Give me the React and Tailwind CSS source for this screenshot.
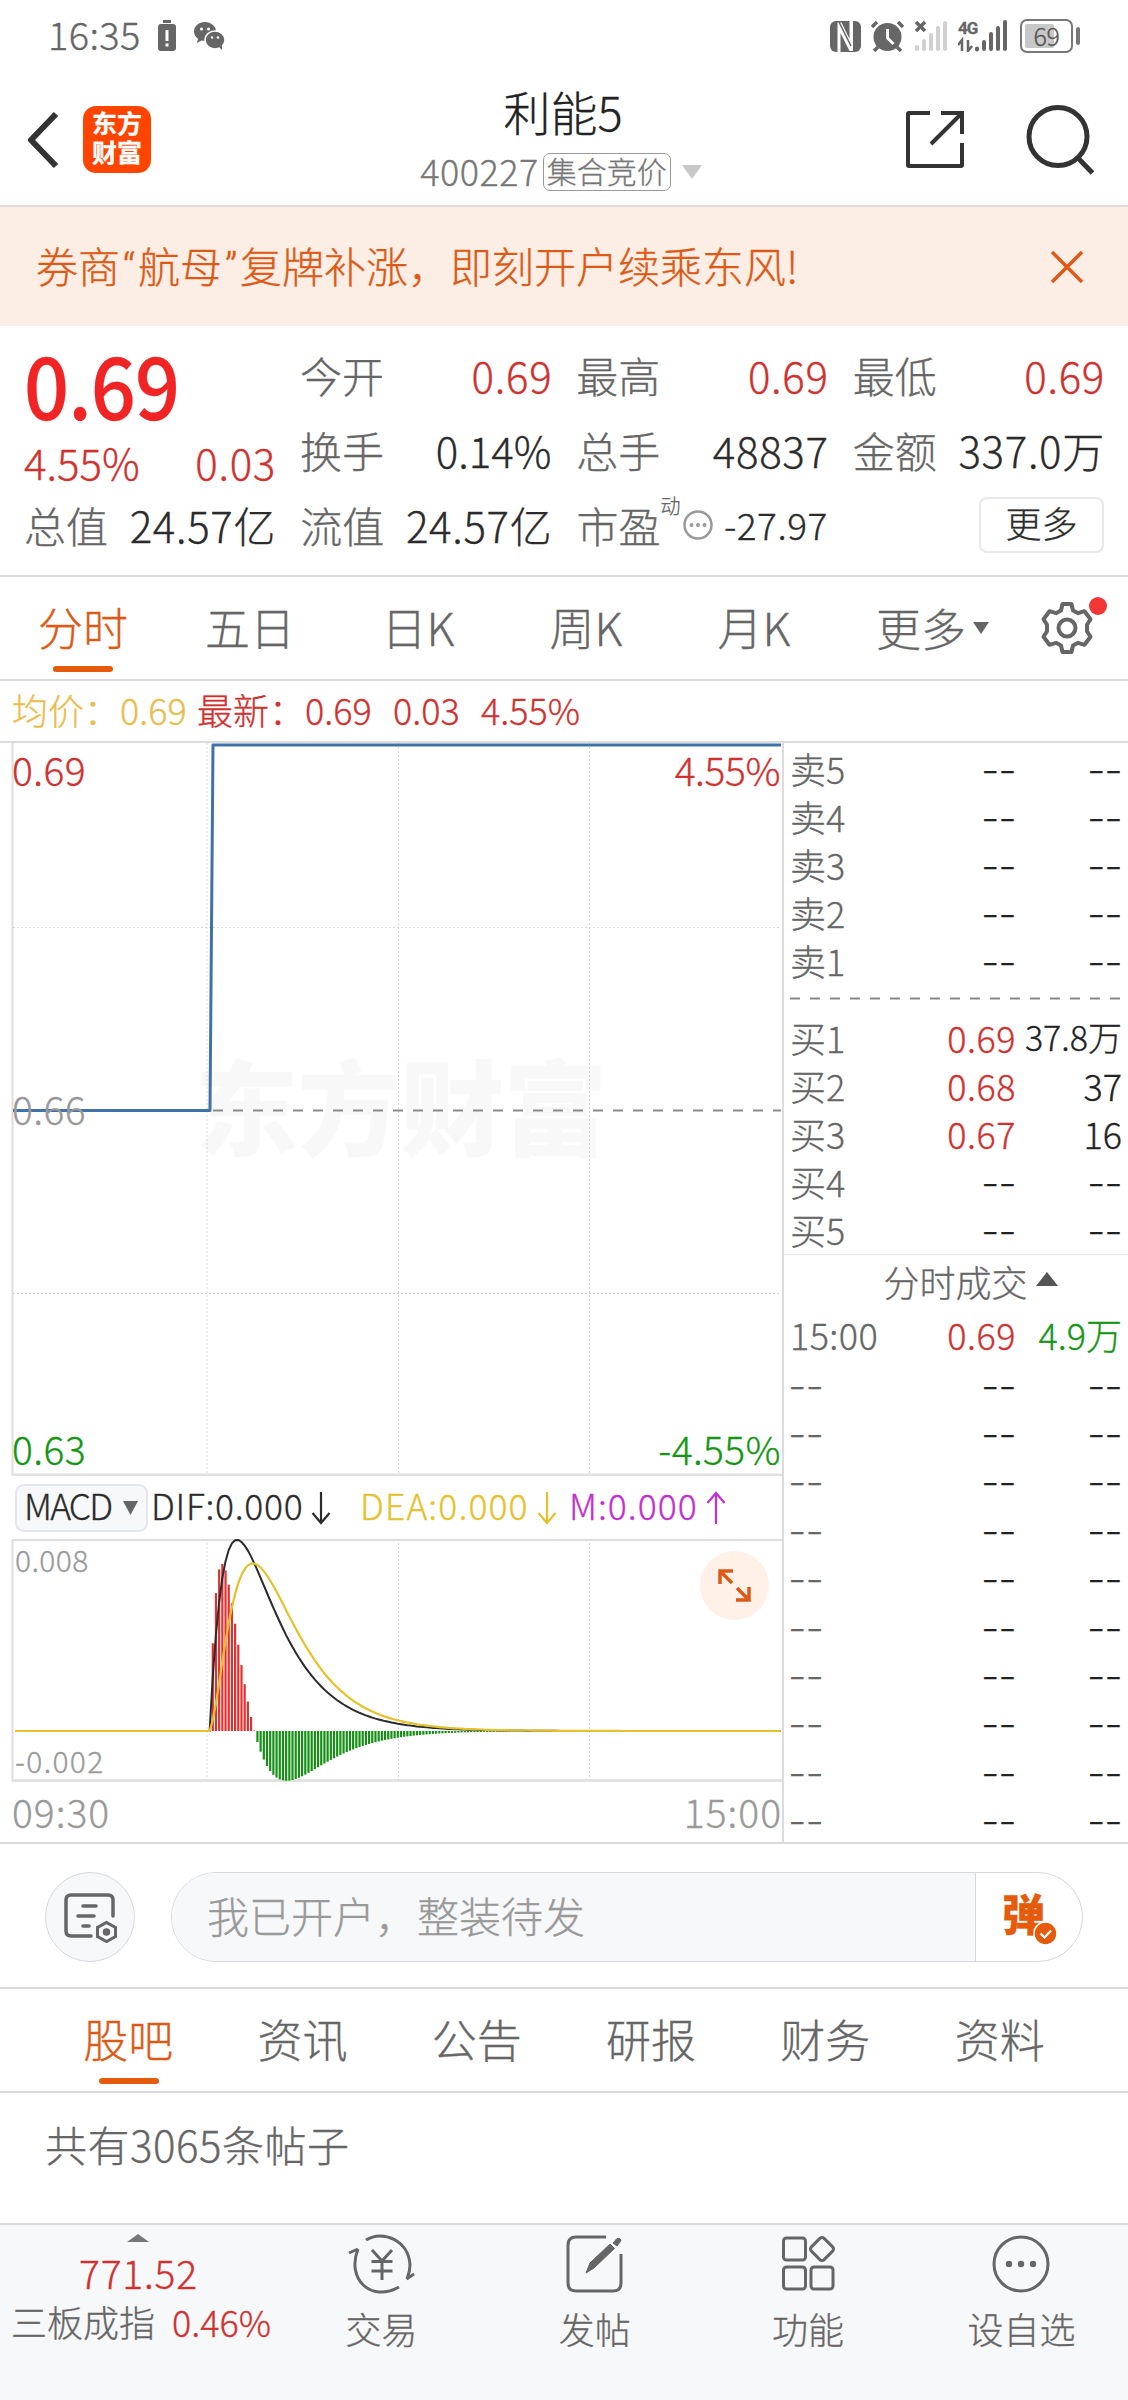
import React from 'react'

const quotes = [
  [['今开', '0.69', true], ['最高', '0.69', true], ['最低', '0.69', true]],
  [['换手', '0.14%'], ['总手', '48837'], ['金额', '337.0万']],
]

const asks = [['卖5'], ['卖4'], ['卖3'], ['卖2'], ['卖1']]
const bids = [['买1', '0.69', '37.8万'], ['买2', '0.68', '37'], ['买3', '0.67', '16'], ['买4'], ['买5']]

// MACD(12, 26, 9) of a price that jumps from 0.66 to 0.69 at minute 62
function buildMacd() {
  const pts = []
  let fast = 0.66, slow = 0.66, dea = 0
  for (let i = 0; i <= 240; i++) {
    const price = i < 62 ? 0.66 : 0.69
    fast += (price - fast) * (2 / 13)
    slow += (price - slow) * (2 / 27)
    const dif = fast - slow
    dea += (dif - dea) * 0.2
    pts.push({ x: 15 + i * 3.19, dif, dea, bar: 2 * (dif - dea) })
  }
  return pts
}

const macd = buildMacd()
const peak = Math.max(...macd.map(p => p.dif))
const toY = v => 192 - (v / peak) * 191
const line = key => macd.map(p => `${p.x.toFixed(1)},${toY(p[key]).toFixed(1)}`).join(' ')

function StatusBar() {
  return (
    <div className="h-[70px] flex items-center pl-[48px] pr-[48px] pt-[2px] text-[#666]">
      <span className="text-[38px] leading-[70px] -mt-[4px] w-[110px] tracking-[0.400px]">16:35</span>
      <svg width="18" height="32" viewBox="0 0 18 32" fill="#666">
        <rect x="5" y="0" width="8" height="3" />
        <rect x="0" y="4" width="18" height="27" rx="3" />
        <path d="M9 10v11M9 23.5v3" stroke="#fff" strokeWidth="3" />
      </svg>
      <svg className="ml-[18px]" width="31" height="28" viewBox="0 0 31 28" fill="#666">
        <path d="M11 0C4.900 0 0 4.200 0 9.500c0 3 1.600 5.500 4 7.200L3 21l4.500-2.500c1.200.3 2.300.5 3.500.5 6 0 11-4.300 11-9.500S17 0 11 0z" />
        <ellipse cx="21" cy="18" rx="10" ry="9" stroke="#fff" strokeWidth="1.500" />
        <path d="M25 25l3 3v-5z" />
        <g fill="#fff"><circle cx="7.500" cy="7" r="1.500" /><circle cx="14.500" cy="7" r="1.500" /><circle cx="18" cy="15.500" r="1.300" /><circle cx="24" cy="15.500" r="1.300" /></g>
      </svg>
      <div className="flex-1" />
      <svg width="31" height="31" viewBox="0 0 31 31">
        <rect width="31" height="31" rx="6" fill="#666" />
        <path d="M7.500 31V1.500l4 0L19.500 18V0h3.500v30h-3.500L10.500 12v19z" fill="#fff" />
        <path d="M9 1l12 24" stroke="#666" strokeWidth="1.500" />
      </svg>
      <svg className="ml-[10px]" width="33" height="32" viewBox="0 0 33 32">
        <circle cx="16.500" cy="17" r="14" fill="#666" />
        <path d="M1 7l5-5M32 7l-5-5M7 27l-4 4M26 27l4 4" stroke="#666" strokeWidth="3.500" />
        <path d="M16.500 9v9l6 6" fill="none" stroke="#fff" strokeWidth="3" />
      </svg>
      <svg className="ml-[10px]" width="34" height="32" viewBox="0 0 34 32">
        <path d="M2 2l9 9M11 2l-9 9" stroke="#666" strokeWidth="3.500" />
        <path d="M3 29v-2M10 29v-8M17 29V15M24 29V8M31 29V3" stroke="#d0d0d0" strokeWidth="4" strokeLinecap="round" />
      </svg>
      <div className="ml-[10px] w-[50px] h-[32px] relative">
        <span className="absolute left-0 -top-[1px] text-[17px] leading-[18px] font-bold font-['Roboto',sans-serif] tracking-[-1px]">4G</span>
        <svg width="50" height="32" viewBox="0 0 50 32">
          <path d="M4 31V20l-4 5M10 20v11l4-5" fill="none" stroke="#666" strokeWidth="2.500" />
          <path d="M19 29.500v-1M26 29v-7M33 29V14M40 29V8M47 29V2" stroke="#666" strokeWidth="4" strokeLinecap="round" />
        </svg>
      </div>
      <div className="ml-[12px] w-[53px] h-[34px] border-[2.500px] border-[#777] rounded-[7px] relative flex items-center justify-center">
        <div className="absolute left-[3px] top-[3px] bottom-[3px] w-[29px] bg-[#c8c8c8] rounded-[2px]" />
        <span className="relative text-[25px] leading-[24px] -mt-[3px] text-[#555] tracking-[-0.500px]">69</span>
      </div>
      <div className="ml-[3px] w-[4px] h-[18px] bg-[#777] rounded-full" />
    </div>
  )
}

function Header() {
  return (
    <div className="h-[137px] border-b-2 border-[#dcdcdc] flex items-start">
      <svg className="ml-[26px] mt-[41px]" width="34" height="58" viewBox="0 0 34 58">
        <path d="M30 3L5 29l25 26" fill="none" stroke="#333" strokeWidth="6" strokeLinejoin="round" />
      </svg>
      <div className="ml-[23px] mt-[36px] w-[68px] h-[67px] rounded-[13px] bg-[#ff4400] text-white font-bold text-[25px] leading-[29px] text-center pt-[2px]">
        东方<br />财富
      </div>
      <div className="flex-1 flex flex-col items-center pl-[70px]">
        <div className="text-[47px] leading-[60px] mt-[11px] text-[#222]">利能5</div>
        <div className="flex items-center mt-[11px] h-[40px] -ml-[2px]">
          <span className="text-[36px] leading-[40px] -mt-[4px] text-[#777] tracking-[0.500px]">400227</span>
          <span className="ml-[4px] h-[38px] w-[128px] text-center border-[1.500px] border-[#999] rounded-[7px] text-[30px] leading-[32px] text-[#777]">集合竞价</span>
          <svg className="ml-[9px]" width="24" height="16" viewBox="0 0 24 16"><path d="M2 1h20L12 15z" fill="#c8c8c8" /></svg>
        </div>
      </div>
      <svg className="mt-[40px]" width="60" height="60" viewBox="0 0 60 60" fill="none" stroke="#333" strokeWidth="4">
        <path d="M25 3H4q-1 0-1 1v51q0 1 1 1h52q1 0 1-1V33M36 3h21v21M56 4L26 34" />
      </svg>
      <svg className="ml-[59px] mr-[32px] mt-[34px]" width="72" height="72" viewBox="0 0 72 72" fill="none" stroke="#333" strokeWidth="5">
        <circle cx="34" cy="32.500" r="29" /><path d="M54 54l14.500 15" />
      </svg>
    </div>
  )
}

function Banner() {
  return (
    <div className="h-[119px] bg-[#fceee5] text-[#dc5a16] flex items-center justify-between pl-[36px] pr-[43px]">
      <span className="text-[42px] leading-[60px] whitespace-nowrap">
        券商<span className="font-['Roboto',sans-serif] inline-block w-[18px] text-center">“</span>航母<span className="font-['Roboto',sans-serif] inline-block w-[18px] text-center">”</span>复牌补涨，即刻开户续乘东风!
      </span>
      <svg width="36" height="36" viewBox="0 0 36 36"><path d="M3 3l30 30M33 3L3 33" stroke="#dc5a16" strokeWidth="3.500" /></svg>
    </div>
  )
}

function Cell({ label, value, red }) {
  return (
    <div className="flex justify-between">
      <span className="text-[#666]">{label}</span>
      <span className={`${red ? 'text-[#d0312f]' : 'text-[#2b2b2b]'} ${value.includes('%') ? '' : 'tracking-[0.700px] -mr-[1px]'}`}>{value}</span>
    </div>
  )
}

function Quotes() {
  return (
    <div className="h-[251px] border-b-2 border-[#dcdcdc] px-[24px] pt-[11px] text-[42px] leading-[75px]">
      <div className="grid grid-cols-[251px_1fr] gap-x-[25px]">
        <div>
          <div className="text-[86px] leading-[84px] pt-[4px] font-medium text-[#f02424] tracking-[-1px] origin-left scale-x-[0.920]">0.69</div>
          <div className="flex justify-between text-[#d0312f] leading-[64px] mt-[5px] -mb-[7px]">
            <span>4.55%</span><span className="tracking-[0.700px] -mr-[1px]">0.03</span>
          </div>
        </div>
        <div className="grid grid-cols-3 gap-x-[25px]">
          {quotes.flat().map(([label, value, red]) => <Cell key={label} label={label} value={value} red={red} />)}
        </div>
      </div>
      <div className="grid grid-cols-4 gap-x-[25px]">
        <Cell label="总值" value="24.57亿" />
        <Cell label="流值" value="24.57亿" />
        <div className="flex items-center text-[#666] whitespace-nowrap">
          <span>市盈</span>
          <span className="text-[20px] leading-[24px] -mt-[38px]">动</span>
          <svg className="ml-[1px]" width="32" height="32" viewBox="0 0 32 32">
            <circle cx="16" cy="16" r="13.500" fill="none" stroke="#999" strokeWidth="2.500" />
            <g fill="#999"><circle cx="9.500" cy="16" r="2" /><circle cx="16" cy="16" r="2" /><circle cx="22.500" cy="16" r="2" /></g>
          </svg>
          <span className="text-[37px] ml-auto text-[#2b2b2b] tracking-[0.500px]">-27.97</span>
        </div>
        <div className="flex items-center justify-end">
          <div className="w-[125px] h-[56px] border-2 border-[#e8e8e8] rounded-[8px] text-[36px] leading-[47px] text-center text-[#2b2b2b]">更多</div>
        </div>
      </div>
    </div>
  )
}

function PeriodTabs() {
  return (
    <div className="h-[104px] border-b-2 border-[#dcdcdc] flex items-center text-[45px] leading-[100px] text-[#666]">
      <div className="w-[166px] h-full relative text-center text-[#dc5a16]">
        分时
        <div className="absolute left-[53px] top-[89px] w-[60px] h-[6px] rounded-full bg-[#e65a0c]" />
      </div>
      {['五日', '日K', '周K', '月K'].map(t => <div key={t} className="w-[168px] h-full text-center">{t}</div>)}
      <div className="h-full ml-[38px] flex items-center">
        更多
        <svg className="ml-[6px]" width="18" height="14" viewBox="0 0 18 14"><path d="M1 1h16L9 13z" fill="#666" /></svg>
      </div>
      <div className="relative ml-auto mr-[34px]">
        <svg width="54" height="54" viewBox="0 0 54 54" fill="none" stroke="#666" strokeWidth="4" strokeLinejoin="round">
          <path d="M22.500 3h9l1.500 6.500 5 2.700 6.500-2 6 8-3.500 5.500v6.600l3.500 5.500-6 8-6.500-2-5 2.700L31.500 51h-9L21 44.500l-5-2.700-6.500 2-6-8L7 30.300v-6.600l-3.500-5.500 6-8 6.500 2 5-2.700z" />
          <circle cx="27" cy="27" r="8.500" />
        </svg>
        <div className="absolute -right-[13px] -top-[4px] w-[18px] h-[18px] rounded-full bg-[#f33535]" />
      </div>
    </div>
  )
}

function PriceChart() {
  return (
    <div className="relative h-[733px] text-[39px] leading-[40px] tracking-[0.400px]">
      <div className="absolute left-[195px] top-[310px] text-[103px] leading-[102px] font-black text-[#f8f8f8] tracking-normal whitespace-nowrap">东方财富</div>
      <svg className="absolute left-0 top-0" width="782" height="733" viewBox="0 0 782 733" fill="none">
        <path d="M12.500 0v733" stroke="#dedede" strokeWidth="2" />
        <path d="M12 732h770" stroke="#e2e2e2" strokeWidth="3" />
        <path d="M207 0v731M398.500 0v731M589.500 0v731M13 184.500h768M13 550.500h768" stroke="#d8d8d8" strokeDasharray="2 2" />
        <path d="M213 367.500h568" stroke="#8c8c8c" strokeWidth="2" strokeDasharray="10 10" />
        <path d="M13 367.500h197l3-365.500h568" stroke="#3f72a8" strokeWidth="3" strokeLinejoin="round" />
      </svg>
      <span className="absolute left-[12px] top-[6px] text-[#d0312f]">0.69</span>
      <span className="absolute right-[2px] top-[6px] text-[#d0312f] tracking-[-0.400px]">4.55%</span>
      <span className="absolute left-[12px] top-[345px] text-[#999]">0.66</span>
      <span className="absolute left-[12px] top-[685px] text-[#149614]">0.63</span>
      <span className="absolute right-[1px] top-[685px] text-[#149614]">-4.55%</span>
    </div>
  )
}

function Arrow({ color, up }) {
  return (
    <svg className="ml-[8px]" width="20" height="34" viewBox="0 0 20 34" fill="none" stroke={color} strokeWidth="2.200">
      {up ? <path d="M10 33V2M1.500 12L10 2l8.500 10" /> : <path d="M10 1v31M1.500 22L10 32l8.500-10" />}
    </svg>
  )
}

function MacdPanel() {
  return (
    <div>
      <div className="h-[63px] flex items-center pl-[15px] text-[35.500px] leading-[40px] whitespace-nowrap">
        <div className="w-[133px] h-[48px] flex items-center justify-between bg-[#f6f8fa] border-2 border-[#e4e6ea] rounded-[9px] pl-[7px] pr-[8px] text-[#2b2b2b]">
          <span className="tracking-[-1.800px] -mt-[5px]">MACD</span>
          <svg width="15" height="16" viewBox="0 0 15 16"><path d="M0 1h15L7.500 15z" fill="#666" /></svg>
        </div>
        <div className="ml-[3px] w-[209px] flex items-center text-[#2b2b2b] tracking-[0.700px]"><span className="-mt-[5px]">DIF:0.000</span><Arrow color="#2b2b2b" /></div>
        <div className="w-[209px] flex items-center text-[#e6c12c] tracking-[1.100px]"><span className="-mt-[5px]">DEA:0.000</span><Arrow color="#e6c12c" /></div>
        <div className="flex items-center text-[#c22fd0] tracking-[1px]"><span className="-mt-[5px]">M:0.000</span><Arrow color="#c22fd0" up /></div>
      </div>
      <div className="relative h-[243px] text-[30px] leading-[32px] text-[#999]">
        <svg className="absolute left-0 top-0" width="782" height="243" viewBox="0 0 782 243" fill="none">
          <path d="M12.500 0v243M12 1h770" stroke="#dedede" strokeWidth="2" />
          <path d="M12 241.500h770" stroke="#e2e2e2" strokeWidth="3" />
          <path d="M207 0v241M398.500 0v241M589.500 0v241" stroke="#d8d8d8" strokeDasharray="2 2" />
          {macd.filter(p => Math.abs(toY(p.bar) - 192) > 0.3).map(p => (
            <path key={p.x} d={`M${p.x} 192V${toY(p.bar)}`} stroke={p.bar > 0 ? '#e03030' : '#159015'} strokeWidth="2.200" />
          ))}
          <polyline points={line('dif')} stroke="#2b2b2b" strokeWidth="2" />
          <polyline points={line('dea')} stroke="#e6c12c" strokeWidth="2.200" />
        </svg>
        <span className="absolute left-[15px] top-[4px] tracking-[0.400px]">0.008</span>
        <span className="absolute left-[15px] top-[205px] tracking-[1.300px]">-0.002</span>
        <div className="absolute left-[700px] top-[12px] w-[69px] h-[69px] rounded-full bg-[#fff0e8] flex items-center justify-center">
          <svg width="35" height="35" viewBox="0 0 35 35" fill="none" stroke="#dc5a16" strokeWidth="3.500">
            <path d="M3 16V3h13M3 3l12 12M32 19v13H19M32 32L20 20" />
          </svg>
        </div>
      </div>
      <div className="h-[61px] flex justify-between pl-[12px] text-[39px] leading-[58px] text-[#999] tracking-[1px]">
        <span>09:30</span><span>15:00</span>
      </div>
    </div>
  )
}

function Dashes({ gray }) {
  return (
    <span className={`block mt-[6px] text-[38px] leading-[40px] tracking-[2px] scale-x-[1.350] font-['Roboto',sans-serif] ${gray ? 'origin-left text-[#666]' : 'origin-right -mr-[2px] text-[#222]'}`}>--</span>
  )
}

function BookRow({ label, price, volume }) {
  return (
    <div className="h-[48px] flex items-center text-[36px] leading-[43px] text-[#666]">
      <div className="flex-1">{label}</div>
      <div className="flex justify-end text-[#d0312f] tracking-[0.500px]">{price || <Dashes />}</div>
      <div className="w-[106px] flex justify-end text-[#222]">
        {volume ? <span className={volume.length > 4 ? 'text-[34px] -mt-[2px]' : ''}>{volume}</span> : <Dashes />}
      </div>
    </div>
  )
}

function OrderBook() {
  return (
    <div className="w-[346px] border-l-2 border-[#dcdcdc] pl-[6px]">
      <div className="pt-[1px] pr-[6px]">{asks.map(([l]) => <BookRow key={l} label={l} />)}</div>
      <svg className="block" width="332" height="28" viewBox="0 0 332 28"><path d="M0 14.500h332" stroke="#888" strokeWidth="2" strokeDasharray="10 10" /></svg>
      <div className="pr-[6px] h-[242px] pt-[1px]">{bids.map(([l, p, v]) => <BookRow key={l} label={l} price={p} volume={v} />)}</div>
      <div className="h-[57px] -ml-[6px] pl-[29px] pb-[4px] border-t border-[#e5e5e5] flex items-center justify-center text-[36px] leading-[52px] text-[#666]">
        分时成交
        <svg className="ml-[8px] -mt-[4px]" width="22" height="14" viewBox="0 0 22 14"><path d="M0 14h22L11 0z" fill="#555" /></svg>
      </div>
      <div className="pr-[6px]">
        <div className="h-[48.400px] flex items-center text-[36px] leading-[42px] pb-[3px]">
          <span className="flex-1 text-[#666] tracking-[0.400px]">15:00</span>
          <span className="text-[#d0312f] tracking-[0.500px]">0.69</span>
          <span className="w-[106px] text-right text-[#149614]">4.9万</span>
        </div>
        {Array.from({ length: 10 }, (_, i) => (
          <div key={i} className="h-[48.400px] flex items-center">
            <div className="flex-1"><Dashes gray /></div>
            <Dashes />
            <div className="w-[106px] flex justify-end"><Dashes /></div>
          </div>
        ))}
      </div>
    </div>
  )
}

function SearchStrip() {
  return (
    <div className="h-[147px] border-y-2 border-[#d9dade] flex items-center px-[45px] pt-[2px]">
      <div className="w-[90px] h-[90px] rounded-full border-[1.500px] border-[#d6d8dc] bg-[#f7f8fa] flex items-center justify-center">
        <svg className="ml-[2px] mt-[2px]" width="54" height="50" viewBox="0 0 54 50" fill="none" stroke="#666" strokeWidth="3.500" strokeLinecap="round">
          <path d="M27 43H7q-5 0-5-5V7q0-5 5-5h37q5 0 5 5v16" />
          <path d="M19 13h13M14 23h16M19 33h6" />
          <path d="M44 29l9 5v9l-9 5-9-5v-9z" strokeWidth="3" transform="translate(-1.500 0.500)" />
          <circle cx="42.500" cy="39" r="2" />
        </svg>
      </div>
      <div className="ml-[36px] flex-1 h-[90px] rounded-full border-[1.500px] border-[#d6d8dc] overflow-hidden flex">
        <div className="flex-1 bg-[#f7f8fa] pl-[35px] text-[42px] leading-[84px] text-[#999]">我已开户，整装待发</div>
        <div className="w-[107px] border-l-[1.500px] border-[#d6d8dc] relative pl-[26px] text-[43px] leading-[78px] font-black text-[#e65a0c]">
          弹
          <svg className="absolute left-[57px] top-[48px]" width="25" height="25" viewBox="0 0 25 25" fill="none">
            <circle cx="12.500" cy="12.500" r="11.500" fill="#e65a0c" stroke="#fff" strokeWidth="1.500" />
            <path d="M7.500 12.500l4 4 6.500-7" stroke="#fff" strokeWidth="2.200" />
          </svg>
        </div>
      </div>
    </div>
  )
}

function SectionTabs() {
  return (
    <div className="h-[104px] border-b-2 border-[#d9dade] flex pl-[41px] text-[45px] leading-[100px] text-[#666]">
      {['股吧', '资讯', '公告', '研报', '财务', '资料'].map((t, i) => (
        <div key={t} className={`relative w-[174.300px] text-center ${i === 0 ? 'text-[#dc5a16]' : ''}`}>
          {t}
          {i === 0 && <div className="absolute left-[58px] top-[89px] w-[60px] h-[6px] rounded-full bg-[#e65a0c]" />}
        </div>
      ))}
    </div>
  )
}

function NavItem({ label, children }) {
  return (
    <div className="w-[213.300px] flex flex-col items-center text-[#666]">
      <svg className="mt-[4px]" width="70" height="70" viewBox="0 0 70 70" fill="none" stroke="#666" strokeWidth="3">{children}</svg>
      <span className="text-[36px] leading-[44px] mt-[7px]">{label}</span>
    </div>
  )
}

function BottomNav() {
  return (
    <div className="h-[177px] border-t-2 border-[#d9dade] bg-[#f7f8fa] flex">
      <div className="w-[275px] flex flex-col items-center pl-[2px]">
        <svg className="mt-[9px]" width="22" height="8" viewBox="0 0 22 8"><path d="M0 8h22L11 0z" fill="#777" /></svg>
        <span className="text-[39px] leading-[44px] mt-[8px] text-[#d0312f] tracking-[0.800px]">771.52</span>
        <div className="text-[36px] leading-[44px] mt-[5px] text-[#666] pl-[5px]">三板成指<span className="text-[#d0312f] ml-[17px]">0.46%</span></div>
      </div>
      <NavItem label="交易">
        <path d="M19 11C36 0 62 12 63 36c0 4-1 9-3 14M2 24l9-4M11 20C-1 50 24 74 52 58" />
        <path d="M59.500 50l7.500-5M25 21l10 11 10-11M24.500 32.500h21M24.500 42h21M35 32v19" />
      </NavItem>
      <NavItem label="发帖">
        <path d="M46 8H16q-8 0-8 8v38q0 8 8 8h37q8 0 8-8V25" />
        <path d="M26 44l4-10 20-19 4.500 4.500L34 39zM53 14l4-4.500q3-1 4 1.500 0 1-4 6z" fill="#666" strokeWidth="1" />
      </NavItem>
      <NavItem label="功能">
        <rect x="10.500" y="9" width="22" height="22" rx="3" />
        <rect x="10.500" y="38" width="22" height="22" rx="3" />
        <rect x="38" y="38" width="22" height="22" rx="3" />
        <rect x="40" y="11" width="18" height="18" rx="3" transform="rotate(45 49 20)" />
      </NavItem>
      <NavItem label="设自选">
        <circle cx="35" cy="35" r="27" />
        <g fill="#666" stroke="none"><circle cx="23" cy="35" r="3.200" /><circle cx="35" cy="35" r="3.200" /><circle cx="47" cy="35" r="3.200" /></g>
      </NavItem>
    </div>
  )
}

export default function App() {
  return (
    <div className="w-[1128px] h-[2400px] overflow-hidden bg-white font-light font-['Noto_Sans_CJK_SC',sans-serif] [-webkit-text-stroke:0.3px] flex flex-col">
      <StatusBar />
      <Header />
      <Banner />
      <Quotes />
      <PeriodTabs />
      <div className="h-[62px] border-b-2 border-[#dcdcdc] flex text-[36px] leading-[57px] pl-[12px] text-[#d0312f] whitespace-nowrap">
        <span className="text-[#e9bd4d] w-[185px]">均价：0.69</span>
        <span className="w-[196px]">最新：0.69</span>
        <span className="w-[88px]">0.03</span>
        <span>4.55%</span>
      </div>
      <div className="flex h-[1099px]">
        <div className="w-[782px]">
          <PriceChart />
          <MacdPanel />
        </div>
        <OrderBook />
      </div>
      <SearchStrip />
      <SectionTabs />
      <div className="flex-1 pl-[45px] text-[42px] leading-[102px] text-[#666] tracking-[0.500px]">共有3065条帖子</div>
      <BottomNav />
    </div>
  )
}
